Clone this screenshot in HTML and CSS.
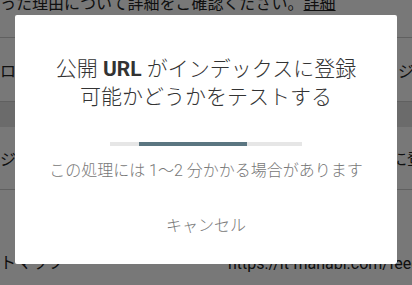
FILE: index.html
```html
<!DOCTYPE html>
<html lang="ja">
<head>
<meta charset="utf-8">
<title>URL テスト</title>
<link rel="stylesheet" href="styles.css">
</head>
<body>
<div class="page">
  <div class="row r1"><span class="top-text">った理由について詳細をご確認ください。<span class="link">詳細</span></span></div>
  <div class="row r2"><span class="cell-l">ロ</span><span class="cell-r">ジ</span></div>
  <div class="row r3"></div>
  <div class="row r4"><span class="cell-l">ジ<span class="blue">ン</span></span><span class="cell-r">に登録</span></div>
  <div class="row r5"><span class="cell-l">トマップ</span><span class="cell-url">https://it-manabi.com/feed</span></div>
</div>
<div class="scrim"></div>
<div class="dialog">
  <h1 class="title">公開 <b>URL</b> がインデックスに登録<br>可能かどうかをテストする</h1>
  <div class="progress"><div class="bar"></div></div>
  <p class="note">この処理には 1〜2 分かかる場合があります</p>
  <div class="actions"><span class="cancel">キャンセル</span></div>
</div>
</body>
</html>
```
FILE: styles.css
```css
html, body {
  margin: 0;
  padding: 0;
  width: 412px;
  height: 285px;
  overflow: hidden;
  background: #fff;
  font-family: Roboto, "Noto Sans CJK JP", sans-serif;
}
.page {
  color: #222;
  font-size: 16px;
  white-space: nowrap;
}
.row {
  display: grid;
  grid-template-columns: 398px 1fr;
  align-items: center;
  overflow: hidden;
}
.r1 {
  height: 37px;
  border-bottom: 1px solid #ccc;
  align-items: start;
}
.top-text {
  margin-top: -6px;
  line-height: 20px;
  grid-column: 1 / 3;
}
.link {
  text-decoration: underline;
}
.r2 {
  height: 63px;
  border-bottom: 1px solid #ccc;
}
.r3 {
  height: 25px;
  background: #e4e4e4;
}
.r4 {
  height: 62px;
  border-bottom: 1px solid #ccc;
  grid-template-columns: 391px 1fr;
}
.blue {
  color: #1a5fb4;
}
.r5 {
  height: 94px;
  grid-template-columns: 228px 1fr;
  align-items: end;
}
.r5 span {
  padding-bottom: 11px;
}
.cell-url {
  font-size: 16px;
}
.scrim {
  position: fixed;
  inset: 0;
  background: rgba(0, 0, 0, 0.53);
}
.dialog {
  position: fixed;
  top: 15px;
  left: 15px;
  width: 382px;
  height: 249px;
  background: #fff;
  border-radius: 2px;
  box-sizing: border-box;
  padding-top: 40px;
  display: flex;
  flex-direction: column;
  align-items: center;
}
.title {
  margin: 0;
  font-size: 21px;
  font-weight: 300;
  line-height: 28px;
  color: #333;
  text-align: center;
}
.title b {
  font-weight: 700;
}
.progress {
  margin-top: 31px;
  width: 192px;
  height: 4px;
  background: #e6e6e6;
}
.bar {
  margin-left: 29px;
  width: 108px;
  height: 4px;
  background: #5b7681;
}
.note {
  margin: 13px 0 0;
  font-size: 16px;
  font-weight: 300;
  line-height: 24px;
  color: #777;
}
.actions {
  margin-top: 31px;
}
.cancel {
  font-size: 16px;
  font-weight: 300;
  line-height: 24px;
  color: #777;
}
```
